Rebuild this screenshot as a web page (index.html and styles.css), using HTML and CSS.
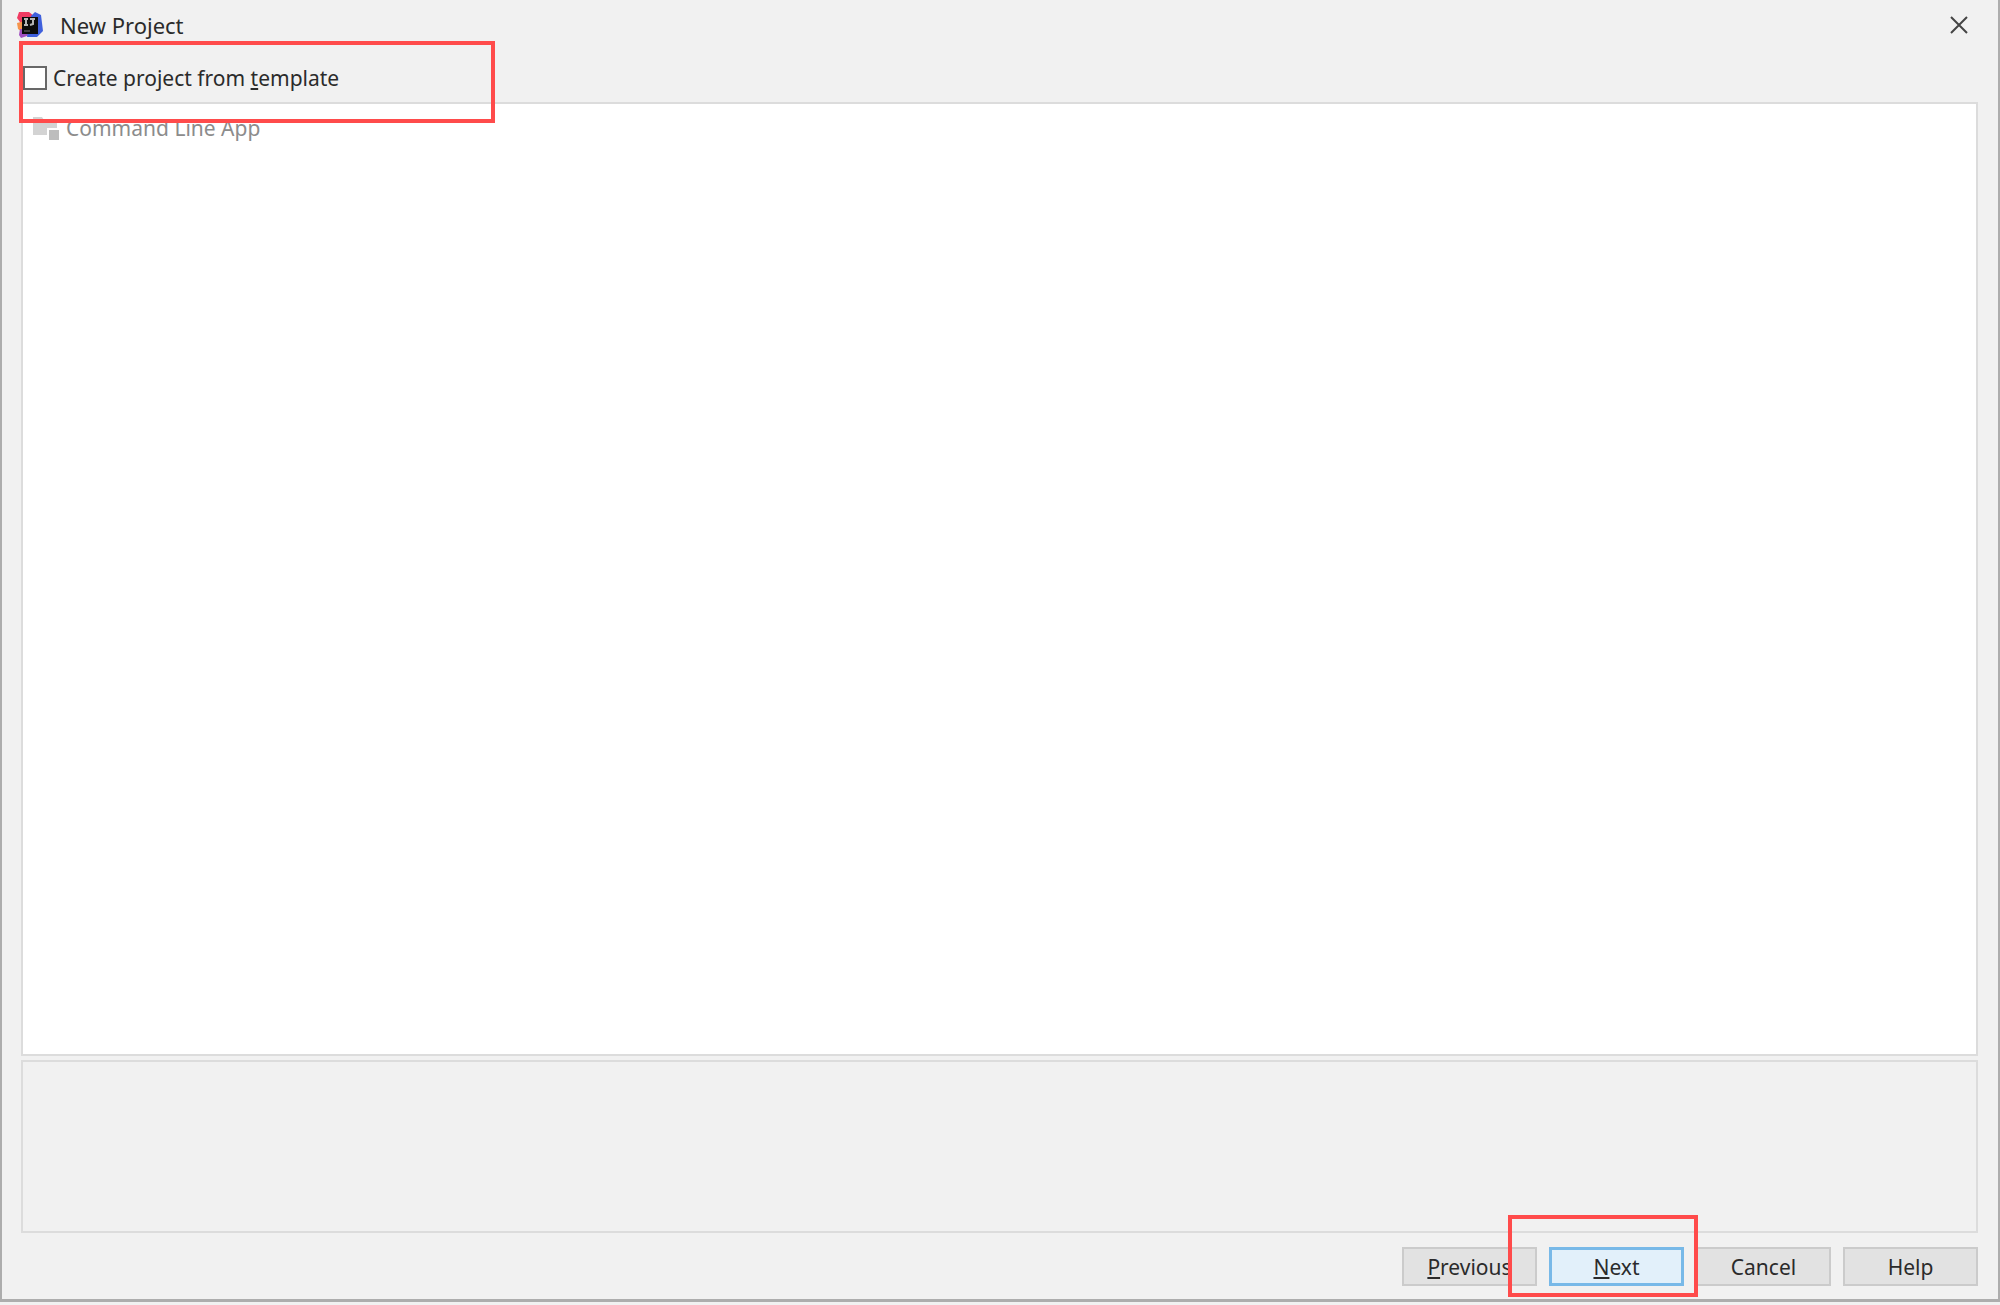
FILE: index.html
```html
<!DOCTYPE html>
<html lang="en">
<head>
    <meta charset="UTF-8">
    <meta name="viewport" content="width=device-width, initial-scale=1.0">
    <title>New Project</title>
    <link rel="stylesheet" href="styles.css">
</head>
<body>
    <div class="dialog">
        <header class="titlebar">
            <svg class="logo" viewBox="0 0 28 28" aria-hidden="true">
                <path d="M3 1h10l5 4v12H2l2-6-3-4z" fill="#f03a62"/>
                <path d="M1 12l8-2v13l-7-5z" fill="#f5934a"/>
                <path d="M4 18h10v6l-9 3-2-3z" fill="#a04fc0"/>
                <path d="M15 5l4-4 6 3 2 16-6 6H11z" fill="#3f60dc"/>
                <rect x="6" y="6" width="16" height="17" fill="#0c0c0c"/>
                <path d="M8 8h4M10 8v6M8 14h4M14 8h5M17 8v5l-3 1" fill="none" stroke="#b5b5b5" stroke-width="2"/>
                <path d="M8 20h6" stroke="#777" stroke-width="1"/>
            </svg>
            <h1 class="title">New Project</h1>
            <button type="button" class="close" aria-label="Close">
                <svg viewBox="0 0 18 18"><path d="M1 1l16 16M17 1L1 17" fill="none" stroke="#444" stroke-width="2"/></svg>
            </button>
        </header>

        <main class="content">
            <div class="option">
                <input type="checkbox" id="fromTemplate">
                <label for="fromTemplate">Create project from <u>t</u>emplate</label>
                <span class="highlight highlight-option"></span>
            </div>
            <ul class="templates">
                <li class="template">
                    <svg class="template-icon" viewBox="0 0 26 24" aria-hidden="true">
                        <path d="M0 1h9l2 3h13v15H0z" fill="#d3d3d3"/>
                        <rect x="14" y="12" width="12" height="12" fill="#fff"/>
                        <rect x="16" y="14" width="10" height="10" fill="#bdbdbd"/>
                    </svg>
                    <span>Command Line App</span>
                </li>
            </ul>
            <div class="description"></div>
        </main>

        <footer class="actions">
            <button type="button" class="btn"><u>P</u>revious</button>
            <div class="next">
                <button type="button" class="btn btn-default"><u>N</u>ext</button>
                <span class="highlight highlight-next"></span>
            </div>
            <button type="button" class="btn">Cancel</button>
            <button type="button" class="btn">Help</button>
        </footer>
    </div>
</body>
</html>
```

FILE: styles.css
```css
* {
    box-sizing: border-box;
}
body {
    margin: 0;
    padding-bottom: 3px;
    height: 100vh;
    background: #f1f1f1;
    color: #2b2b2b;
    font-family: "Noto Sans", "Open Sans", sans-serif;
    font-size: 21px;
    line-height: 28px;
}
button {
    font: inherit;
    color: inherit;
}
u {
    text-decoration-thickness: 2px;
    text-underline-offset: 2px;
    text-decoration-skip-ink: none;
}
.dialog {
    display: flex;
    flex-direction: column;
    height: 100%;
    padding: 0 20px 13px 19px;
    background: #f1f1f1;
    border: solid #adadad;
    border-width: 0 2px 3px 2px;
}
.titlebar {
    display: flex;
    align-items: center;
    height: 50px;
}
.logo {
    width: 28px;
    height: 28px;
    margin: 0 16px 0 -5px;
}
.title {
    margin: 0;
    font-size: 22px;
    font-weight: normal;
}
.close {
    display: flex;
    margin-left: auto;
    padding: 10px;
    border: none;
    background: none;
}
.close svg {
    width: 18px;
    height: 18px;
}
.content {
    display: flex;
    flex-direction: column;
    flex: 1;
}
.option {
    position: relative;
    display: flex;
    align-items: center;
    gap: 6px;
    height: 52px;
    padding: 4px 0 0 2px;
}
.option input {
    appearance: none;
    width: 24px;
    height: 24px;
    margin: 0;
    background: #fff;
    border: 2px solid #686868;
}
.templates {
    flex: 1;
    margin: 0 0 4px;
    padding: 10px;
    list-style: none;
    background: #fff;
    border: 2px solid #dcdcdc;
}
.template {
    display: flex;
    align-items: center;
    gap: 7px;
    color: #8c8c8c;
}
.template-icon {
    width: 26px;
    height: 24px;
}
.description {
    height: 173px;
    border: 2px solid #dcdcdc;
}
.actions {
    display: flex;
    justify-content: flex-end;
    gap: 12px;
    padding-top: 14px;
}
.btn {
    display: block;
    width: 135px;
    height: 39px;
    padding: 0;
    background: #e2e2e2;
    border: 2px solid #cbcbcb;
}
.btn-default {
    background: #e2f0fa;
    border: 3px solid #78b9e8;
}
.next {
    position: relative;
}
/* red callout frames drawn over the dialog */
.highlight {
    position: absolute;
    z-index: 1;
    border: 4px solid #ff4b4b;
    pointer-events: none;
}
.highlight-option {
    top: -9px;
    left: -2px;
    width: 476px;
    height: 82px;
}
.highlight-next {
    top: -32px;
    left: -41px;
    width: 190px;
    height: 82px;
}
```
